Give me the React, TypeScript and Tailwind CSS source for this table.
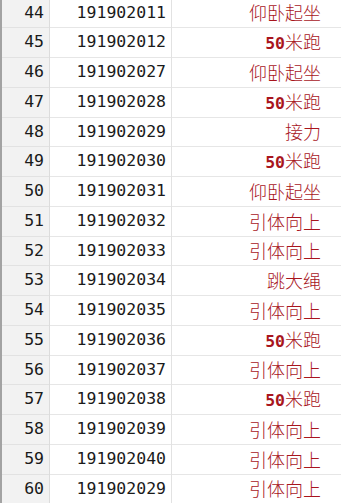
const rows: [number, string, string][] = [
  [44, "191902011", "仰卧起坐"],
  [45, "191902012", "50米跑"],
  [46, "191902027", "仰卧起坐"],
  [47, "191902028", "50米跑"],
  [48, "191902029", "接力"],
  [49, "191902030", "50米跑"],
  [50, "191902031", "仰卧起坐"],
  [51, "191902032", "引体向上"],
  [52, "191902033", "引体向上"],
  [53, "191902034", "跳大绳"],
  [54, "191902035", "引体向上"],
  [55, "191902036", "50米跑"],
  [56, "191902037", "引体向上"],
  [57, "191902038", "50米跑"],
  [58, "191902039", "引体向上"],
  [59, "191902040", "引体向上"],
  [60, "191902029", "引体向上"],
]

function Event({ text }: { text: string }) {
  // digits are in the mono face, the rest in CJK
  const m = text.match(/^(\d*)(.*)$/)
  const num = m ? m[1] : ""
  const rest = m ? m[2] : text
  return (
    <span className="text-[#a8151d]">
      {num && <span className="font-['DejaVu_Sans_Mono',monospace] text-[16.5px] font-bold">{num}</span>}
      <span className="font-['Noto_Sans_CJK_SC',sans-serif] text-[18px] font-light">{rest}</span>
    </span>
  )
}

export default function App() {
  return (
    <div className="w-[341px] h-[503px] overflow-hidden bg-white">
      <div className="flex border-l-2 border-[#a3a3a3] mt-[-1.5px]">
        <div className="w-[48px] bg-[#f2f2f2] border-r border-[#dcdcdc] shrink-0">
          {rows.map((r) => (
            <div
              key={r[0]}
              className="h-[29.75px] border-b border-[#e2e2e2] flex items-center justify-end pr-[5px] font-['DejaVu_Sans_Mono',monospace] text-[16.5px] text-[#1a1a1a]"
            >
              {r[0]}
            </div>
          ))}
        </div>
        <div className="w-[122px] border-r border-[#e2e2e2] shrink-0">
          {rows.map((r) => (
            <div
              key={r[0]}
              className="h-[29.75px] border-b border-[#e6e6e6] flex items-center justify-end pr-[5px] font-['DejaVu_Sans_Mono',monospace] text-[16.5px] text-[#1a1a1a]"
            >
              {r[1]}
            </div>
          ))}
        </div>
        <div className="flex-1">
          {rows.map((r) => (
            <div
              key={r[0]}
              className="h-[29.75px] border-b border-[#e6e6e6] flex items-center justify-end pr-[20px]"
            >
              <Event text={r[2]} />
            </div>
          ))}
        </div>
      </div>
    </div>
  )
}
